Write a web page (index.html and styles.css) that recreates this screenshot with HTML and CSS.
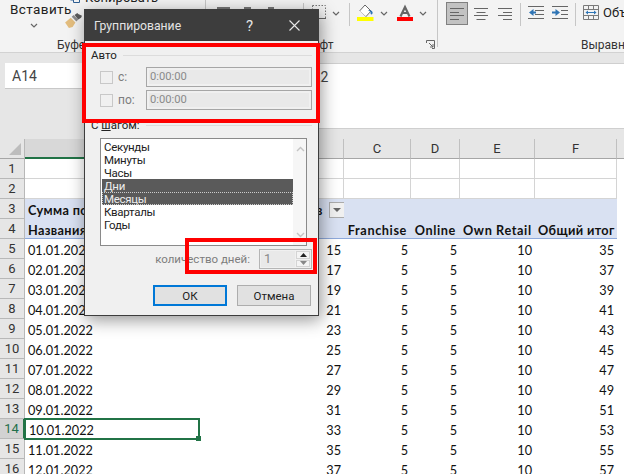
FILE: index.html
```html
<!DOCTYPE html>
<html lang="ru">
<head>
<meta charset="utf-8">
<title>Группирование</title>
<link rel="stylesheet" href="styles.css">
</head>
<body>
<div class="app">
  <header class="ribbon">
    <section class="group clip">
      <div class="tools clip-tools">
        <div class="paste">Вставить
          <svg class="chev paste-chev" viewBox="0 0 8 5"><path d="M1 1l3 3 3-3"/></svg>
        </div>
        <div class="clip-col">
          <div class="copy"><svg class="copy-ico" viewBox="0 0 10 12"><path d="M.5 0v9H3M3.500 3.500h6v8h-6z"/></svg>Копировать</div>
          <svg class="brush" viewBox="0 0 20 16"><path d="M0 10l6-5 5 5-3 5-4 1z" fill="#e3bd7e"/><path d="M7 4l2-2 5 5-2 2z" fill="#8a8a8a"/><path d="M10 2l3-2 1 1 4 2-1 2-3 2z" fill="#5a5a5a"/></svg>
        </div>
      </div>
      <div class="label clip-label">Буфер обмена</div>
    </section>
    <section class="group font">
      <div class="tools font-tools">
        <div class="biu"><i class="i1"></i><i class="i2"></i><i class="i3"></i></div>
        <span class="sep sep-a"></span>
        <svg class="borders" viewBox="0 0 14 14"><path d="M.5 .5h13v13M.5 .5v13" fill="none" stroke="#777" stroke-dasharray="1.500 1.500"/><path d="M0 13.500h14" stroke="#666"/></svg>
        <svg class="chev chev-a" viewBox="0 0 8 5"><path d="M1 1l3 3 3-3"/></svg>
        <span class="sep sep-b"></span>
        <svg class="fill" viewBox="0 0 17 17"><path d="M8 1l6 6-5 5.500-6-6z" fill="#fff" stroke="#666"/><path d="M3 7h10.500l-5 5z" fill="#fff"/><path d="M11 6c2 0 4 .5 4.500 2 .5 1.500-.5 2.500-1 2.500-1 0-1-1.500-1-2.500z" fill="#2f75b5"/><path d="M0 13h16.500v4H0z" fill="#ffff00"/></svg>
        <svg class="chev chev-b" viewBox="0 0 8 5"><path d="M1 1l3 3 3-3"/></svg>
        <svg class="color" viewBox="0 0 16 17"><path d="M3.500 12.500L8 3l4.500 9.500M5.300 9h5.400" fill="none" stroke="#666" stroke-width="2.200"/><path d="M0 13h16v4H0z" fill="#ff0000"/></svg>
        <svg class="chev chev-c" viewBox="0 0 8 5"><path d="M1 1l3 3 3-3"/></svg>
      </div>
      <div class="label font-label"><span>Шрифт</span><svg class="launch" viewBox="0 0 9 9"><path d="M.5 3V.5h8v8H6M3 3l4 4M7 4v3H4" fill="none" stroke="#666"/></svg></div>
    </section>
    <section class="group align">
      <div class="tools align-tools">
        <span class="abtn on"><svg viewBox="0 0 14 12"><path d="M0 .5h14M0 4.500h9M0 7.500h14M0 11.500h9"/></svg></span>
        <span class="abtn"><svg viewBox="0 0 14 12"><path d="M0 .5h14M2.500 4.500h9M0 7.500h14M2.500 11.500h9"/></svg></span>
        <span class="abtn"><svg viewBox="0 0 14 12"><path d="M0 .5h14M5 4.500h9M0 7.500h14M5 11.500h9"/></svg></span>
        <span class="sep sep-c"></span>
        <svg class="indent" viewBox="0 0 16 13"><path d="M0 .5h16M7 4.500h9M7 8.500h9M0 12.500h16"/><path class="blue" d="M5.500 3L1 6.500l4.500 3.500V7.500H8v-2H5.500z"/></svg>
        <svg class="indent indent-b" viewBox="0 0 16 13"><path d="M0 .5h16M9 4.500h7M9 8.500h7M0 12.500h16"/><path class="blue" d="M3.500 3L8 6.500 3.500 10V7.500H0v-2h3.500z"/></svg>
        <span class="sep sep-d"></span>
        <svg class="merge" viewBox="0 0 16 15"><path d="M.5 .5h15v14H.5zM.5 4.500h15M.5 10.500h15M5.500 .5v4M10.500 .5v4M5.500 10.500v4M10.500 10.500v4" fill="none" stroke="#7a7a7a"/><path d="M3 7.500h10" stroke="#2f75b5"/><path d="M2.500 7.500l2.500-2v4zM13.500 7.500l-2.500-2v4z" fill="#2f75b5"/></svg>
        <span class="merge-text">Объединить</span>
      </div>
      <div class="label align-label">Выравнивание</div>
    </section>
  </header>

  <div class="formula">
    <div class="namebox">A14</div>
    <div class="fx">10.01.2022</div>
  </div>

  <div class="sheet">
    <div class="corner"><span></span></div>
    <div class="col active">A</div><div class="col">B</div><div class="col">C</div><div class="col">D</div><div class="col">E</div><div class="col">F</div><div class="col last"></div>

    <div class="rh">1</div><div class="c g"></div><div class="c g"></div><div class="c g"></div><div class="c g"></div><div class="c g"></div><div class="c g"></div><div class="c"></div>
    <div class="rh">2</div><div class="c g"></div><div class="c g"></div><div class="c g"></div><div class="c g"></div><div class="c g"></div><div class="c g"></div><div class="c"></div>

    <div class="rh">3</div><div class="c pv b">Сумма по полю Продажи</div><div class="c pv b r">Названия столбцов<span class="filter"><i></i></span></div><div class="c pv"></div><div class="c pv"></div><div class="c pv"></div><div class="c pv"></div><div class="c"></div>
    <div class="rh">4</div><div class="c pv pvb b">Названия строк</div><div class="c pv pvb"></div><div class="c pv pvb b r lat">Franchise</div><div class="c pv pvb b r lat">Online</div><div class="c pv pvb b r lat">Own Retail</div><div class="c pv pvb b r">Общий итог</div><div class="c"></div>

    <div class="rh">5</div><div class="c">01.01.2022</div><div class="c r">15</div><div class="c r">5</div><div class="c r">5</div><div class="c r">10</div><div class="c r">35</div><div class="c"></div>
    <div class="rh">6</div><div class="c">02.01.2022</div><div class="c r">17</div><div class="c r">5</div><div class="c r">5</div><div class="c r">10</div><div class="c r">37</div><div class="c"></div>
    <div class="rh">7</div><div class="c">03.01.2022</div><div class="c r">19</div><div class="c r">5</div><div class="c r">5</div><div class="c r">10</div><div class="c r">39</div><div class="c"></div>
    <div class="rh">8</div><div class="c">04.01.2022</div><div class="c r">21</div><div class="c r">5</div><div class="c r">5</div><div class="c r">10</div><div class="c r">41</div><div class="c"></div>
    <div class="rh">9</div><div class="c">05.01.2022</div><div class="c r">23</div><div class="c r">5</div><div class="c r">5</div><div class="c r">10</div><div class="c r">43</div><div class="c"></div>
    <div class="rh">10</div><div class="c">06.01.2022</div><div class="c r">25</div><div class="c r">5</div><div class="c r">5</div><div class="c r">10</div><div class="c r">45</div><div class="c"></div>
    <div class="rh">11</div><div class="c">07.01.2022</div><div class="c r">27</div><div class="c r">5</div><div class="c r">5</div><div class="c r">10</div><div class="c r">47</div><div class="c"></div>
    <div class="rh">12</div><div class="c">08.01.2022</div><div class="c r">29</div><div class="c r">5</div><div class="c r">5</div><div class="c r">10</div><div class="c r">49</div><div class="c"></div>
    <div class="rh">13</div><div class="c">09.01.2022</div><div class="c r">31</div><div class="c r">5</div><div class="c r">5</div><div class="c r">10</div><div class="c r">51</div><div class="c"></div>
    <div class="rh active">14</div><div class="c selected">10.01.2022<span class="handle"></span></div><div class="c r">33</div><div class="c r">5</div><div class="c r">5</div><div class="c r">10</div><div class="c r">53</div><div class="c"></div>
    <div class="rh">15</div><div class="c">11.01.2022</div><div class="c r">35</div><div class="c r">5</div><div class="c r">5</div><div class="c r">10</div><div class="c r">55</div><div class="c"></div>
    <div class="rh">16</div><div class="c">12.01.2022</div><div class="c r">37</div><div class="c r">5</div><div class="c r">5</div><div class="c r">10</div><div class="c r">57</div><div class="c"></div>
  </div>

  <div class="dialog">
    <div class="title">
      <span class="title-text">Группирование</span>
      <span class="help">?</span>
      <svg class="close" viewBox="0 0 11 11"><path d="M.5 .5l10 10M10.500 .5l-10 10"/></svg>
    </div>
    <div class="body">
      <div class="legend"><span>Авто</span><i></i></div>
      <div class="field first"><span class="check"></span><span class="flabel">с:</span><span class="input"><span>0:00:00</span></span></div>
      <div class="field"><span class="check"></span><span class="flabel">по:</span><span class="input"><span>0:00:00</span></span></div>
      <div class="legend step"><span>С <u>ш</u>агом:</span><i></i></div>
      <div class="list">
        <ul>
          <li>Секунды</li><li>Минуты</li><li>Часы</li><li class="sel">Дни</li><li class="sel focus">Месяцы</li><li>Кварталы</li><li>Годы</li>
        </ul>
        <div class="scroll">
          <svg viewBox="0 0 9 6"><path d="M1 5l3.500-3.500L8 5"/></svg>
          <svg viewBox="0 0 9 6"><path d="M1 1l3.500 3.500L8 1"/></svg>
        </div>
      </div>
      <div class="count">
        <span class="count-label">количество дней:</span>
        <span class="spin"><span class="spin-val">1</span><span class="spin-btns"><b><svg viewBox="0 0 7 4"><path d="M3.500 0L7 4H0z"/></svg></b><b class="dim"><svg viewBox="0 0 7 4"><path d="M0 0h7L3.500 4z"/></svg></b></span></span>
      </div>
      <div class="buttons">
        <button class="btn default">ОК</button>
        <button class="btn">Отмена</button>
      </div>
    </div>
  </div>

  <div class="mark mark-auto"></div>
  <div class="mark mark-count"></div>
</div>
</body>
</html>
```

FILE: styles.css
```css
* { box-sizing: border-box; }
html, body { margin: 0; padding: 0; }
body { width: 624px; height: 474px; overflow: hidden; background: #fff; }
.app { position: relative; width: 624px; height: 474px; overflow: hidden; font-family: Roboto, "Noto Sans", sans-serif; color: #222; }

/* ribbon */
.ribbon { display: flex; height: 53px; background: #f3f3f3; border-bottom: 1px solid #d2d2d2; overflow: hidden; }
.group { display: flex; flex-direction: column; height: 47px; border-right: 1px solid #c6c6c6; flex: none; }
.tools { display: flex; height: 38px; flex: none; }
.label { font-size: 12px; line-height: 14px; color: #333; text-align: center; white-space: nowrap; }
.clip { width: 206px; }
.clip-tools { padding-left: 10px; }
.paste { width: 55px; font-size: 13.5px; letter-spacing: .4px; line-height: 14px; padding-top: 2px; color: #222; }
.chev { width: 8px; height: 5px; display: block; flex: none; }
.chev path { fill: none; stroke: #666; stroke-width: 1.2; }
.paste-chev { margin: 7px 0 0 20px; }
.clip-col { display: flex; flex-direction: column; }
.copy { font-size: 13px; line-height: 14px; margin-top: -9px; white-space: nowrap; display: flex; gap: 5px; margin-left: 5px; height: 14px; }
.copy-ico { width: 10px; height: 12px; margin-top: 0; flex: none; }
.copy-ico path { fill: none; stroke: #2f5f93; }
.brush { width: 19px; height: 15px; margin-top: 8px; }
.clip-label { text-align: left; padding-left: 57px; }
.font { width: 232px; }
.font-tools { padding-left: 11px; }
.biu { display: flex; width: 57px; padding-top: 7px; }
.biu i { height: 2px; background: #777; }
.i1 { width: 13px; }
.i2 { width: 7px; margin-left: 14px; }
.i3 { width: 6px; margin-left: 17px; }
.sep { display: block; width: 1px; height: 23px; background: #c6c6c6; flex: none; margin-top: 3px; }
.sep-a { margin-left: 29px; }
.borders { width: 14px; height: 14px; margin: 5px 0 0 8px; flex: none; }
.chev-a { margin: 11px 0 0 6px; }
.sep-b { margin-left: 9px; }
.fill { width: 17px; height: 17px; margin: 4px 0 0 7px; flex: none; }
.chev-b { margin: 11px 0 0 6px; }
.color { width: 16px; height: 17px; margin: 4px 0 0 9px; flex: none; }
.chev-c { margin: 11px 0 0 6px; }
.font-label { display: flex; padding-left: 60px; }
.font-label span { width: 96px; text-align: center; }
.launch { width: 9px; height: 9px; margin: 2px 0 0 64px; flex: none; }
.align { flex: 1; border-right: 0; }
.align-tools { padding-left: 8px; align-items: flex-start; }
.abtn { width: 22px; height: 23px; margin: 2px 2px 0 0; display: flex; align-items: center; justify-content: center; flex: none; border: 1px solid transparent; }
.abtn.on { background: #c2c2c2; border-color: #808080; }
.abtn svg { width: 14px; height: 12px; }
.abtn path, .indent path { stroke: #666; fill: none; }
.sep-c { margin-left: 2px; }
.indent { width: 16px; height: 13px; margin: 6px 0 0 7px; flex: none; }
.indent-b { margin-left: 8px; }
.indent path.blue { fill: #2f75b5; stroke: none; }
.sep-d { margin-left: 7px; }
.merge { width: 16px; height: 15px; margin: 5px 0 0 7px; flex: none; }
.merge-text { font-size: 13px; line-height: 16px; margin: 5px 0 0 4px; white-space: nowrap; }
.align-label { text-align: left; padding-left: 143px; }

/* formula bar */
.formula { display: flex; align-items: flex-start; height: 86px; background: #e6e6e6; padding-top: 10px; }
.namebox { width: 240px; height: 26px; margin-left: 5px; background: #fff; border-bottom: 1px solid #c8c8c8; font-size: 14px; line-height: 26px; padding-left: 7px; color: #444; flex: none; }
.fx { flex: 1; background: #fff; height: 66px; font-size: 14px; line-height: 26px; padding-left: 3px; border-top: 1px solid #cfcfcf; border-bottom: 1px solid #cfcfcf; color: #444; margin-left: 10px; }

/* sheet */
.sheet { display: grid; grid-template-columns: 25px 174px 145px 67px 49px 75px 82px 7px; grid-auto-rows: 20px; font-family: Lato, "Liberation Sans", sans-serif; font-size: 12.7px; color: #111; }
.corner { background: #e6e6e6; border-right: 1px solid #b8b8b8; border-bottom: 1px solid #a6a6a6; display: flex; justify-content: flex-end; align-items: flex-end; padding: 0 3px 3px 0; }
.corner span { width: 0; height: 0; border-left: 12px solid transparent; border-bottom: 12px solid #bdbdbd; }
.col { height: 20px; background: #e6e6e6; border-right: 1px solid #c0c0c0; border-bottom: 1px solid #a6a6a6; text-align: center; line-height: 19px; font-family: Roboto, sans-serif; font-size: 13px; color: #333; }
.col.active { background: #d8d8d8; border-bottom: 2px solid #217346; }
.col.last { border-right: 0; }
.rh { background: #e6e6e6; border-right: 1px solid #b8b8b8; border-bottom: 1px solid #b8b8b8; text-align: center; line-height: 20px; font-family: Roboto, sans-serif; font-size: 13px; color: #333; }
.rh.active { background: #d2d2d2; color: #1f6f4a; border-right: 2px solid #217346; }
.c { padding: 1px 3px 0; line-height: 20px; white-space: nowrap; overflow: hidden; min-width: 0; }
.c.g { border-right: 1px solid #d4d4d4; border-bottom: 1px solid #d4d4d4; }
.c.r { text-align: right; }
.c.b { font-weight: 700; letter-spacing: .35px; }
.c.lat { letter-spacing: .6px; padding-right: 4px; }
.c.pv { background: #d9e1f2; }
.c.pvb { border-bottom: 1px solid #8ea9db; }
.filter { display: inline-flex; width: 17px; height: 16px; vertical-align: middle; margin: -3px -2px 0 6px; background: #f0f0f0; border: 1px solid #ababab; align-items: center; justify-content: center; }
.filter i { width: 0; height: 0; border: 4px solid transparent; border-top: 4px solid #666; border-bottom: 0; }
.selected { position: relative; overflow: visible; border: 2px solid #217346; margin: -1px -1px -1px -1px; padding: 0 3px 0 3px; line-height: 20px; }
.handle { position: absolute; right: -3px; bottom: -3px; width: 5px; height: 5px; background: #217346; border: 0; }

/* dialog */
.dialog { position: absolute; left: 84px; top: 9px; width: 235px; height: 307px; background: #f0f0f0; border: 1px solid #3d3d3d; box-shadow: 2px 4px 16px rgba(0,0,0,.42); font-family: Roboto, "Noto Sans", sans-serif; font-size: 11.5px; color: #222; display: flex; flex-direction: column; }
.title { display: flex; align-items: center; height: 31px; background: #3d3d3d; color: #e4e4e4; font-size: 12.2px; padding: 0 18px 0 9px; flex: none; }
.title-text { flex: 1; }
.help { font-size: 15px; margin-right: 36px; }
.close { width: 11px; height: 11px; }
.close path { stroke: #e8e8e8; stroke-width: 1.1; fill: none; }
.body { flex: 1; padding: 7px 6px 0 6px; display: flex; flex-direction: column; }
.legend { display: flex; align-items: center; height: 14px; gap: 6px; font-size: 11.5px; line-height: 14px; }
.legend i { flex: 1; height: 1px; background: #dcdcdc; }
.field { display: flex; align-items: center; height: 20px; margin: 3px 0 0 9px; }
.field.first { margin-top: 5px; }
.check { width: 13px; height: 13px; border: 1px solid #c8c8c8; background: #f0f0f0; flex: none; }
.flabel { width: 33px; padding-left: 5px; color: #7d7d7d; font-size: 12px; }
.input { flex: 1; height: 20px; border: 1px solid #a6a6a6; padding: 2px; display: flex; }
.input span { flex: 1; background: #e9e9e9; font-size: 11.2px; line-height: 14px; color: #8a8a8a; padding-left: 1px; }
.step { margin-top: 8px; }
.list { display: flex; width: 207px; height: 108px; margin: 6px 0 0 9px; background: #fff; border: 1px solid #8a8a8a; flex: none; padding-left: 1px; }
.list ul { list-style: none; margin: 0; padding: 1px 0 0 0; flex: 1; font-size: 11.5px; letter-spacing: -.3px; line-height: 14px; }
.list li { padding-left: 2px; height: 13px; }
.list li.sel { background: #5a5a5a; color: #eee; }
.list li.focus { outline: 1px dotted #ccc; outline-offset: -1px; }
.scroll { width: 13px; background: #f6f6f6; display: flex; flex-direction: column; justify-content: space-between; padding: 7px 0 7px 3px; }
.scroll svg { width: 9px; height: 6px; }
.scroll path { fill: none; stroke: #c4c4c4; stroke-width: 1.4; }
.count { display: flex; justify-content: flex-end; align-items: center; height: 20px; margin-top: 3px; }
.count-label { color: #7d7d7d; font-size: 11.5px; margin-right: 9px; }
.spin { display: flex; width: 53px; height: 20px; border: 1px solid #b5b5b5; padding: 1px; }
.spin-val { width: 34px; background: #e9e9e9; color: #8a8a8a; padding-left: 3px; font-size: 13px; line-height: 16px; }
.spin-btns { display: flex; flex-direction: column; flex: 1; gap: 1px; margin-left: 1px; }
.spin-btns b { flex: 1; background: #f4f4f4; border: 1px solid #d4d4d4; display: flex; align-items: center; justify-content: center; }
.spin-btns svg { width: 7px; height: 4px; }
.spin-btns path { fill: #222; }
.spin-btns .dim path { fill: #888; }
.buttons { display: flex; margin: 16px 0 0 62px; gap: 10px; }
.btn { width: 74px; height: 21px; padding: 0; background: #e1e1e1; border: 1px solid #adadad; font: 11.5px Roboto, sans-serif; color: #222; }
.btn.default { border: 2px solid #0078d7; }

/* annotation frames */
.mark { position: absolute; border: 4px solid #ff0000; pointer-events: none; }
.mark-auto { left: 82px; top: 43px; width: 238px; height: 80px; }
.mark-count { left: 185px; top: 238px; width: 132px; height: 36px; }
```
